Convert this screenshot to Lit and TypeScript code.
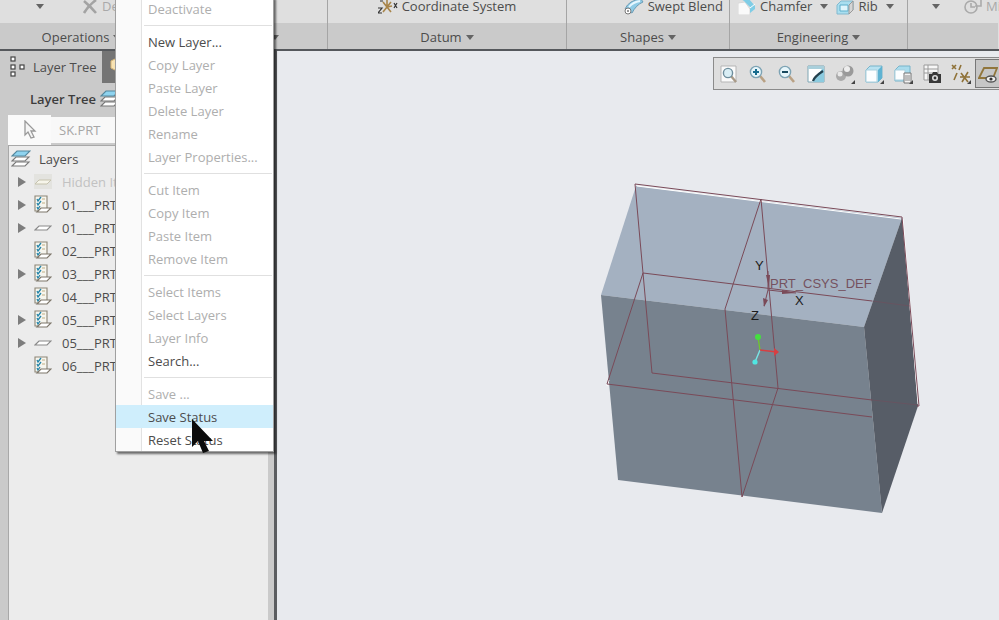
import { LitElement, html, css, svg, nothing } from "lit";
import { customElement } from "lit/decorators.js";
import { classMap } from "lit/directives/class-map.js";

type MenuEntry = { label: string; enabled?: boolean; active?: boolean } | null;
type Layer = { name: string; kind: "hidden" | "rule" | "plain"; open: boolean };

const MENU: MenuEntry[] = [
  { label: "Deactivate" },
  null,
  { label: "New Layer...", enabled: true },
  { label: "Copy Layer" },
  { label: "Paste Layer" },
  { label: "Delete Layer" },
  { label: "Rename" },
  { label: "Layer Properties..." },
  null,
  { label: "Cut Item" },
  { label: "Copy Item" },
  { label: "Paste Item" },
  { label: "Remove Item" },
  null,
  { label: "Select Items" },
  { label: "Select Layers" },
  { label: "Layer Info" },
  { label: "Search...", enabled: true },
  null,
  { label: "Save ..." },
  { label: "Save Status", enabled: true, active: true },
  { label: "Reset Status", enabled: true },
];

const LAYERS: Layer[] = [
  { name: "Hidden Items", kind: "hidden", open: true },
  { name: "01___PRT_", kind: "rule", open: true },
  { name: "01___PRT_", kind: "plain", open: true },
  { name: "02___PRT_", kind: "rule", open: false },
  { name: "03___PRT_", kind: "rule", open: true },
  { name: "04___PRT_", kind: "rule", open: false },
  { name: "05___PRT_", kind: "rule", open: true },
  { name: "05___PRT_", kind: "plain", open: true },
  { name: "06___PRT_", kind: "rule", open: false },
];

const icon = (w: number, h: number, body: unknown) => html`<svg
  width=${w}
  height=${h}
  viewBox="0 0 ${w} ${h}"
  aria-hidden="true"
>
  ${body}
</svg>`;

const caret = icon(8, 5, svg`<path d="M0 0h8L4 5z" fill="#646464"/>`);

const cornerMark = svg`<path d="M20 16v4h-4z" fill="#444"/>`;

const ICONS = {
  cross: icon(16, 14, svg`<path d="M2 1q6 5 12 12M14 0Q7 5 2 13" fill="none" stroke="#a3a3a3" stroke-width="2.6"/>`),
  csys: icon(20, 16, svg`<g fill="none" stroke="#a8854a" stroke-width="1.6"><path d="M9 0v9M5 3l8 10M13 3L5 13M9 8l5-1"/></g>
    <path d="M0 9h4l-4 5h4M16 4l3 5M19 4l-3 5M2 2h3" fill="none" stroke="#333" stroke-width="1.2"/>`),
  blend: icon(20, 16, svg`<path d="M1 10Q5 1 17 0l2 3Q12 6 8 14z" fill="#8fcbe6" stroke="#6d9cb5"/>
    <path d="M5 8Q9 3 16 2" fill="none" stroke="#e6f7ff" stroke-width="2"/>
    <circle cx="4" cy="12" r="3" fill="#fff" stroke="#777"/><circle cx="4" cy="12" r="1" fill="#777"/>`),
  chamfer: icon(18, 16, svg`<path d="M0 4l7-1 5 7v6H0z" fill="#fafafa" stroke="#d8d8d8"/>
    <path d="M3 0h8l6 7v3l-5 4v-6L6 2z" fill="#7fcde6"/><path d="M12 9l5-4" stroke="#fff"/>`),
  rib: icon(18, 16, svg`<path d="M1 6l4-4h12v9l-4 4H1z" fill="#a9deef" stroke="#82b9cf"/>
    <path d="M4 6h8v6H4z" fill="#dff5fc" stroke="#5daecb"/><path d="M13 6l4-4v9l-4 4z" fill="#d5d5d5" stroke="#999"/>`),
  clock: icon(18, 16, svg`<circle cx="7" cy="8" r="6" fill="none" stroke="#aaa" stroke-width="1.6"/>
    <path d="M7 4v4h4M11 7h6V0" fill="none" stroke="#aaa" stroke-width="1.6"/>`),
  treeTab: icon(17, 22, svg`<g fill="#fff" stroke="#444" stroke-width="1.2"><rect x="3" y="1" width="4" height="4"/>
    <rect x="3" y="9" width="4" height="4"/><rect x="3" y="16" width="4" height="4"/><rect x="12" y="9" width="4" height="4"/></g>`),
  folder: icon(16, 20, svg`<path d="M1 4l6-3h8v16l-8 2v-5l-6-3z" fill="#f8e3b4" stroke="#d9b878"/>`),
  layers: icon(20, 18, svg`<g stroke="#777" stroke-width="1.1"><path d="M1 16l4-4h13l-4 4z" fill="#fff"/>
    <path d="M1 11l4-4h13l-4 4z" fill="#fff"/><path d="M1 6l5-5h13l-5 5z" fill="#8ed3ef" stroke="#54879d"/></g>`),
  pointer: icon(14, 20, svg`<path d="M2 1v14l3-3 3 6 3-1-3-6h4z" fill="#f5f5f5" stroke="#999" stroke-width="1.3"/>`),
  hidden: icon(18, 16, svg`<rect x="0" y="0" width="18" height="15" fill="#e3e3df"/>
    <path d="M1 10l4-4h12l-4 4z" fill="#f6f5ea" stroke="#c6c3ae"/>`),
  plain: icon(18, 16, svg`<path d="M1 10l4-4h12l-4 4z" fill="#fff" stroke="#8a8a8a" stroke-width="1.2"/>`),
  rule: icon(18, 19, svg`<path d="M1 1h12v15H1z" fill="#f6f5ee" stroke="#8c8576" stroke-width="1.1"/>
    <path d="M8 4h3M8 8h3" stroke="#bfae83"/>
    <path d="M3 4l1 2 3-4M3 8l1 2 3-4M3 12l1 2 2-3" fill="none" stroke="#2484a8" stroke-width="1.3"/>
    <path d="M3 17l4-4h10l-4 4z" fill="#fff" stroke="#7d766a" stroke-width="1.2"/>`),
};

const lens = svg`<path d="M12 12l5 6" stroke="#b9a184" stroke-width="2.6"/><circle cx="8" cy="8" r="5.6" fill="#e6f5fa" stroke="#7da3b4" stroke-width="1.4"/>`;

const VIEW_TOOLS: { label: string; art: unknown; on?: boolean }[] = [
  { label: "Refit", art: svg`<path d="M2 2h15v16H2z" fill="#fafafa" stroke="#b5b5b5"/><path d="M12 12l5 6" stroke="#a99a87" stroke-width="2.4"/><circle cx="9" cy="9" r="4.6" fill="#d9eef5" stroke="#6e8e9d" stroke-width="1.4"/>` },
  { label: "Zoom In", art: svg`${lens}<path d="M5 8h6M8 5v6" stroke="#176c8e" stroke-width="2"/>` },
  { label: "Zoom Out", art: svg`${lens}<path d="M5 8h6" stroke="#17495e" stroke-width="2"/>` },
  { label: "Repaint", art: svg`<path d="M2 2h16v16H2z" fill="#fff" stroke="#7fa6b4"/><path d="M18 2v16H7z" fill="#8ccbdf"/><path d="M2 2h16v3H2z" fill="#a9cfdb"/><path d="M7 17q1-4 10-10" fill="none" stroke="#24414e" stroke-width="2.2"/>` },
  { label: "Display Style", art: svg`<circle cx="6" cy="12" r="5" fill="#a9a9a9"/><circle cx="5" cy="10" r="2.5" fill="#e8e8e8"/><circle cx="13" cy="7" r="5.5" fill="#9a9a9a"/><circle cx="12" cy="5" r="3" fill="#ededed"/>${cornerMark}` },
  { label: "Saved Orientations", art: svg`<path d="M2 6l4-4h12v12l-4 4H2z" fill="#b9e2f1" stroke="#79b4ca"/><path d="M2 6h11v12H2z" fill="#fcfeff" stroke="#a9cfdd"/><path d="M14 6l4-4v12l-4 4z" fill="#5fb3d2"/>${cornerMark}` },
  { label: "View Manager", art: svg`<path d="M2 6l4-4h11v12l-4 3H2z" fill="#aadced" stroke="#79b4ca"/><path d="M2 6h10v10H2z" fill="#fcfeff" stroke="#a9cfdd"/><path d="M11 9h7v10h-7z" fill="#f3f3f3" stroke="#777"/><path d="M12 12h5M12 14h5M12 16h5" stroke="#888"/>${cornerMark}` },
  { label: "Camera View", art: svg`<path d="M2 1h14v15H2zM2 5h14M2 9h14M6 1v15" fill="#f7f7f7" stroke="#9a9a9a"/><path d="M7 10h3l1-2h4l1 2h3v9H7z" fill="#383838"/><circle cx="13" cy="14" r="3" fill="#ddd"/><circle cx="13" cy="14" r="1.4" fill="#333"/>` },
  { label: "Datum Display Filters", art: svg`<path d="M1 1l4 4M5 1L1 5M10 1L8 6M6 9l-3 7M10 9l7 9M17 8l-6 10M9 13h10" fill="none" stroke="#8f7238" stroke-width="1.6"/>${cornerMark}` },
  { label: "Plane Display", on: true, art: svg`<path d="M1 14L6 4h13l-4 10z" fill="none" stroke="#91763c" stroke-width="1.8"/><ellipse cx="13" cy="15" rx="5" ry="3" fill="#eee" stroke="#555" stroke-width="1.4"/><circle cx="13" cy="15" r="1.6" fill="#333"/>` },
];

@customElement("cad-ribbon")
class CadRibbon extends LitElement {
  static styles = css`
    :host {
      display: grid;
      grid-template-columns: 164px 164px 239px 163px 178px minmax(0, 1fr);
      border-bottom: 2px solid #55585c;
      background: #dfdfdf;
    }
    .group {
      display: flex;
      flex-direction: column;
      min-width: 0;
      border-right: 1px solid #a5a5a5;
    }
    .group:first-child,
    .group:last-child {
      border-right-color: transparent;
    }
    .tools {
      display: flex;
      align-items: center;
      justify-content: center;
      gap: 8px;
      height: 23px;
      padding-bottom: 10px;
      box-sizing: border-box;
    }
    .tools.start {
      justify-content: flex-start;
      padding-left: 36px;
      gap: 38px;
    }
    .tools.near {
      justify-content: flex-start;
      padding-left: 8px;
    }
    .tools.tail {
      justify-content: flex-start;
      padding-left: 24px;
      gap: 24px;
    }
    .tools.right {
      justify-content: flex-end;
      padding-right: 6px;
    }
    button {
      display: flex;
      align-items: center;
      gap: 4px;
      flex: none;
      margin: 0;
      padding: 0;
      border: 0;
      background: none;
      color: inherit;
      font: inherit;
      line-height: 13px;
      white-space: nowrap;
    }
    button:disabled {
      color: #a9a9a9;
    }
    .label {
      margin-right: 4px;
    }
    .title {
      box-sizing: border-box;
      justify-content: center;
      height: 26px;
      padding-top: 2px;
      background: #cacaca;
    }
    .title.right {
      justify-content: flex-end;
      padding-right: 48px;
    }
    svg {
      flex: none;
    }
  `;

  render() {
    return html`
      <div class="group">
        <div class="tools start">
          <button aria-label="More operations">${caret}</button>
          <button disabled>${ICONS.cross} Delete</button>
        </div>
        <button class="title">Operations ${caret}</button>
      </div>
      <div class="group">
        <div class="tools"></div>
        <button class="title right" aria-label="Get Data">${caret}</button>
      </div>
      <div class="group">
        <div class="tools"><button>${ICONS.csys} Coordinate System</button></div>
        <button class="title">Datum ${caret}</button>
      </div>
      <div class="group">
        <div class="tools right"><button>${ICONS.blend} Swept Blend</button></div>
        <button class="title">Shapes ${caret}</button>
      </div>
      <div class="group">
        <div class="tools near">
          <button>${ICONS.chamfer} <span class="label">Chamfer</span> ${caret}</button>
          <button>${ICONS.rib} <span class="label">Rib</span> ${caret}</button>
        </div>
        <button class="title">Engineering ${caret}</button>
      </div>
      <div class="group">
        <div class="tools tail">
          <button aria-label="More engineering">${caret}</button>
          <button disabled>${ICONS.clock} Mirror</button>
        </div>
        <div class="title"></div>
      </div>
    `;
  }
}

@customElement("layer-panel")
class LayerPanel extends LitElement {
  static styles = css`
    :host {
      display: flex;
      flex-direction: column;
      box-sizing: border-box;
      width: 277px;
      flex: none;
      padding: 0 6px 0 8px;
      border-right: 3px solid #5b5d60;
      background: #cacaca;
    }
    .tabs {
      display: flex;
      height: 32px;
    }
    .tab {
      display: flex;
      align-items: center;
      gap: 8px;
      margin: 0;
      padding: 0;
      border: 0;
      background: none;
      color: inherit;
      font: inherit;
    }
    .tab.current {
      width: 94px;
    }
    .tab.other {
      width: 40px;
      padding-left: 8px;
      background: #757575;
    }
    .heading {
      display: flex;
      align-items: center;
      gap: 4px;
      height: 32px;
      margin: 0;
      padding-left: 22px;
      color: #3c3c3c;
      font-size: 13px;
      font-weight: 600;
    }
    .filter {
      display: flex;
      align-items: flex-start;
      height: 30px;
    }
    .pick {
      width: 43px;
      height: 30px;
      margin: 0;
      padding: 0;
      border: 0;
      background: #fafafa;
    }
    .model {
      flex: 1;
      min-width: 0;
      height: 26px;
      margin: 2px 0 0 0;
      box-sizing: border-box;
      padding: 0 8px;
      border: 0;
      background: #f8f8f8;
      color: #a6a6a6;
      font: inherit;
    }
    .tree {
      flex: 1;
      margin: 0;
      padding: 1px 0 0 0;
      list-style: none;
      border: solid #a8a8a8;
      border-width: 1px 0 0 1px;
      background: #ececec;
    }
    .row {
      display: flex;
      align-items: center;
      height: 23px;
      padding-left: 9px;
      white-space: nowrap;
      overflow: hidden;
    }
    .row.root {
      padding-left: 2px;
      gap: 8px;
    }
    .row.off {
      color: #c2c2c2;
    }
    .twisty {
      display: flex;
      width: 16px;
    }
    .name {
      padding-left: 10px;
    }
    svg {
      flex: none;
    }
    .pick svg {
      vertical-align: middle;
    }
  `;

  render() {
    return html`
      <div class="tabs">
        <button class="tab current">${ICONS.treeTab} Layer Tree</button>
        <button class="tab other" aria-label="Folder Browser">${ICONS.folder}</button>
      </div>
      <h2 class="heading">Layer Tree ${ICONS.layers}</h2>
      <div class="filter">
        <button class="pick" aria-label="Select">${ICONS.pointer}</button>
        <input class="model" aria-label="Active model" value="SK.PRT" disabled />
      </div>
      <ul class="tree">
        <li class="row root">${ICONS.layers} Layers</li>
        ${LAYERS.map(
          (l) => html`<li class=${classMap({ row: true, off: l.kind === "hidden" })}>
            <span class="twisty"
              >${l.open ? icon(8, 10, svg`<path d="M0 0l8 5-8 5z" fill="#7d7d7d"/>`) : nothing}</span
            >
            ${ICONS[l.kind]}
            <span class="name">${l.name}</span>
          </li>`
        )}
      </ul>
    `;
  }
}

@customElement("model-view")
class ModelView extends LitElement {
  static styles = css`
    :host {
      position: relative;
      display: block;
      flex: 1;
      min-width: 0;
      overflow: hidden;
      background: #e8eaee;
    }
    .scene {
      display: block;
      width: 100%;
      height: 100%;
    }
    .wire {
      fill: none;
      stroke: #7a4a58;
      stroke-width: 1;
    }
    .halo {
      fill: none;
      stroke: #fff;
      stroke-width: 1;
    }
    .tag {
      font: 13px "Liberation Sans", sans-serif;
      fill: #75525f;
    }
    .axis {
      font: 13px "Liberation Sans", sans-serif;
      fill: #1c1c1c;
    }
    .bar {
      position: absolute;
      top: 6px;
      left: 436px;
      display: flex;
      box-sizing: border-box;
      height: 33px;
      padding: 1px 0;
      border: 1px solid #8b8b8b;
      background: #dedede;
    }
    .tool {
      display: grid;
      place-items: center;
      box-sizing: border-box;
      flex: none;
      width: 29px;
      margin: 0;
      padding: 0;
      border: 1px solid transparent;
      background: none;
    }
    .tool.on {
      border-color: #777;
      background: #c6c6c6;
      justify-items: start;
      padding-left: 2px;
    }
  `;

  render() {
    return html`
      <svg
        class="scene"
        viewBox="277 51 722 569"
        preserveAspectRatio="xMinYMin meet"
        role="img"
        aria-label="Block with datum planes"
      >
        <path d="M636 186L902 218L864 327L601 295z" fill="#a4b1c1" />
        <path d="M601 295L864 327L882 513L618 480z" fill="#77828e" />
        <path d="M902 218L918 406L882 513L864 327z" fill="#575d67" />
        <path class="halo" d="M637 186L901 219M903 219L918 404M607 386L609 380" />
        <path
          class="wire"
          d="M643 273L635 184L902 217L919 406L917 406M643 273L652 373L872 400M643 273L872 301M643 273L607 384L872 417M761 199L725 309L742 497L778 388z"
        />
        <path class="wire" stroke-opacity="0.45" d="M872 301L910 306M872 400L918 405" />
        <path class="wire" d="M768 290V271M768 290L796 293M768 290L764 306" />
        <path d="M766 275h4l-1 13zM782 290l13 3-13 1zM764 307l-1-9 5 2z" fill="#7a4a58" />
        <text class="tag" x="770" y="288">PRT_CSYS_DEF</text>
        <text class="axis" x="755" y="270">Y</text>
        <text class="axis" x="795" y="305">X</text>
        <text class="axis" x="751" y="320">Z</text>
        <path d="M758 337l2 13" stroke="#6fc52f" stroke-width="1.4" />
        <path d="M760 350l-5 12" stroke="#78e5e5" stroke-width="1.4" />
        <path d="M760 350l17 2" stroke="#d83e42" stroke-width="1.4" />
        <path d="M774 348l5 4-5 4z" fill="#d83e42" />
        <circle cx="758" cy="337" r="3" fill="#44df3f" />
        <circle cx="755" cy="362" r="2.6" fill="#50e6e2" />
      </svg>
      <div class="bar" role="toolbar" aria-label="View">
        ${VIEW_TOOLS.map(
          (t) => html`<button class=${classMap({ tool: true, on: !!t.on })} aria-label=${t.label}>
            ${icon(20, 20, t.art)}
          </button>`
        )}
      </div>
    `;
  }
}

@customElement("layer-menu")
class LayerMenu extends LitElement {
  static styles = css`
    :host {
      display: flex;
      flex-direction: column;
      box-sizing: border-box;
      width: 159px;
      border: solid #a0a0a0;
      border-width: 0 1px 1px 1px;
      background: linear-gradient(to right, #fafafa 25px, #e2e2e2 25px, #e2e2e2 26px, #fff 26px);
      box-shadow: 2px 2px 2px rgba(0, 0, 0, 0.55);
    }
    .item {
      box-sizing: border-box;
      height: 23px;
      margin: 0;
      padding: 2px 0 0 32px;
      border: 0;
      background: none;
      color: inherit;
      font: inherit;
      line-height: 21px;
      text-align: left;
      white-space: nowrap;
    }
    .item:disabled {
      color: #aeaeae;
    }
    .item.active {
      background: #cfeefc;
    }
    .rule {
      height: 1px;
      margin: 5px 1px 4px 28px;
      border: 0;
      background: #e0e0e0;
    }
  `;

  render() {
    return MENU.map((m) =>
      m
        ? html`<button
            class=${classMap({ item: true, active: !!m.active })}
            role="menuitem"
            ?disabled=${!m.enabled}
          >
            ${m.label}
          </button>`
        : html`<hr class="rule" />`
    );
  }
}

@customElement("app-root")
class AppRoot extends LitElement {
  static styles = css`
    :host {
      position: relative;
      display: flex;
      flex-direction: column;
      height: 100vh;
      overflow: hidden;
      color: #4c4c4c;
      font: 13px "Open Sans", "Noto Sans", sans-serif;
    }
    .work {
      display: flex;
      flex: 1;
      min-height: 0;
    }
    .menu {
      position: absolute;
      left: 115px;
      top: -3px;
    }
    .cursor {
      position: absolute;
      left: 190px;
      top: 418px;
      pointer-events: none;
    }
  `;

  render() {
    return html`
      <cad-ribbon></cad-ribbon>
      <div class="work">
        <layer-panel></layer-panel>
        <model-view></model-view>
      </div>
      <layer-menu class="menu" role="menu" aria-label="Layer"></layer-menu>
      <svg class="cursor" width="24" height="38" viewBox="0 0 24 38" aria-hidden="true">
        <path d="M2 1v28l6-6 5 12 6-2-5-10h9z" fill="#0c0c0c" />
      </svg>
    `;
  }
}
